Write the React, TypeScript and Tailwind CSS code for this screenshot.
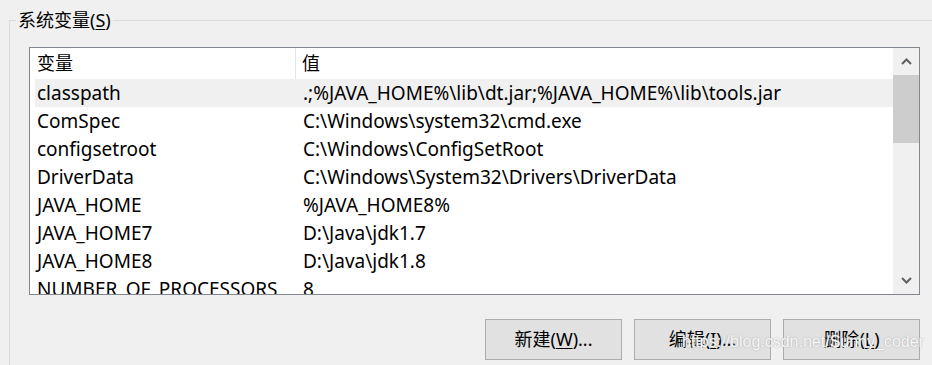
import React from 'react'

const rows: [string, string][] = [
  ['classpath', '.;%JAVA_HOME%\\lib\\dt.jar;%JAVA_HOME%\\lib\\tools.jar'],
  ['ComSpec', 'C:\\Windows\\system32\\cmd.exe'],
  ['configsetroot', 'C:\\Windows\\ConfigSetRoot'],
  ['DriverData', 'C:\\Windows\\System32\\Drivers\\DriverData'],
  ['JAVA_HOME', '%JAVA_HOME8%'],
  ['JAVA_HOME7', 'D:\\Java\\jdk1.7'],
  ['JAVA_HOME8', 'D:\\Java\\jdk1.8'],
  ['NUMBER_OF_PROCESSORS', '8'],
]

const font = { fontFamily: '"Noto Sans", "Noto Sans CJK SC", sans-serif' }

function Chevron({ down }: { down?: boolean }) {
  return (
    <svg width="11" height="7" viewBox="0 0 11 7">
      <path
        d={down ? 'M1 1 L5.5 5.5 L10 1' : 'M1 6 L5.5 1.5 L10 6'}
        fill="none"
        stroke="#606060"
        strokeWidth="2"
      />
    </svg>
  )
}

function Button({ label, hot, suffix }: { label: string; hot: string; suffix?: string }) {
  return (
    <button className="w-[137px] h-[41px] border border-[#adadad] bg-[#e1e1e1] text-[18px] text-black flex items-center justify-center">
      {label}(<span className="underline underline-offset-2">{hot}</span>){suffix}
    </button>
  )
}

export default function App() {
  return (
    <div className="relative w-[932px] h-[365px] overflow-hidden bg-[#f0f0f0] text-black" style={font}>
      <fieldset className="ml-[9px] mt-[8px] w-[960px] h-[420px] border border-[#dcdcdc] pl-[6px] pr-0 pt-0 pb-0">
        <legend className="px-[2px] text-[18px] leading-[24px]">
          系统变量(<span className="underline underline-offset-2">S</span>)
        </legend>

        <div className="ml-[13px] mt-[15px] w-[891px] h-[248px] border border-[#828790] bg-white flex">
          <div className="flex-1 flex flex-col overflow-hidden">
            <div className="h-[31px] shrink-0 flex text-[18px] leading-[31px] ml-[5px]">
              <div className="w-[261px] pl-[2px] border-r border-[#e5e5e5]">变量</div>
              <div className="pl-[6px]">值</div>
            </div>
            {rows.map(([name, value], i) => (
              <div
                key={name}
                className={`h-[28px] shrink-0 flex ml-[5px] text-[19px] leading-[28px] whitespace-nowrap ${
                  i === 0 ? 'bg-[#f0f0f0]' : ''
                }`}
              >
                <div className="w-[262px] pl-[2px]">{name}</div>
                <div className="pl-[6px]">{value}</div>
              </div>
            ))}
          </div>
          <div className="w-[26px] bg-[#f0f0f0] flex flex-col items-center">
            <div className="h-[27px] flex items-center justify-center">
              <Chevron />
            </div>
            <div className="w-full h-[68px] bg-[#cdcdcd]" />
            <div className="flex-1" />
            <div className="h-[27px] flex items-center justify-center">
              <Chevron down />
            </div>
          </div>
        </div>

        <div className="mt-[24px] w-[904px] flex justify-end gap-[12px]">
          <Button label="新建" hot="W" suffix="..." />
          <Button label="编辑" hot="I" suffix="..." />
          <Button label="删除" hot="L" />
        </div>
      </fieldset>

      <div
        className="absolute left-[682px] top-[330px] text-[16px] text-[#f8f8f8] pointer-events-none"
        style={{ fontFamily: '"Liberation Sans", sans-serif', textShadow: '0 0 1.5px #9a9a9a' }}
      >
        https://blog.csdn.net/Sunny_coder
      </div>
    </div>
  )
}
